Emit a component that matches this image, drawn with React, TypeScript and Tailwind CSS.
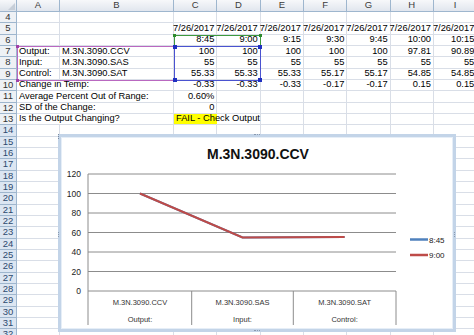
import React from "react";

type Cell = { t?: string; r?: boolean; span?: boolean; fail?: boolean };

const cols = ["A", "B", "C", "D", "E", "F", "G", "H", "I"];

const nums = (vals: string[]): Cell[] => vals.map((v) => ({ t: v, r: true }));

const rows: { n: number; cells: Cell[] }[] = [
  { n: 4, cells: [] },
  { n: 5, cells: [{}, {}, ...nums(Array(7).fill("7/26/2017"))] },
  { n: 6, cells: [{}, {}, ...nums(["8:45", "9:00", "9:15", "9:30", "9:45", "10:00", "10:15"])] },
  { n: 7, cells: [{ t: "Output:" }, { t: "M.3N.3090.CCV" }, ...nums(["100", "100", "100", "100", "100", "97.81", "90.89"])] },
  { n: 8, cells: [{ t: "Input:" }, { t: "M.3N.3090.SAS" }, ...nums(Array(7).fill("55"))] },
  { n: 9, cells: [{ t: "Control:" }, { t: "M.3N.3090.SAT" }, ...nums(["55.33", "55.33", "55.33", "55.17", "55.17", "54.85", "54.85"])] },
  { n: 10, cells: [{ t: "Change in Temp:", span: true }, ...nums(["-0.33", "-0.33", "-0.33", "-0.17", "-0.17", "0.15", "0.15"])] },
  { n: 11, cells: [{ t: "Average Percent Out of Range:", span: true }, { t: "0.60%", r: true }] },
  { n: 12, cells: [{ t: "SD of the Change:", span: true }, { t: "0", r: true }] },
  { n: 13, cells: [{ t: "Is the Output Changing?", span: true }, { t: "FAIL - Check Output", span: true, fail: true }] },
];
for (let n = 14; n <= 32; n++) rows.push({ n, cells: [] });

function fill(cells: Cell[]): Cell[] {
  const out = [...cells];
  let used = out.reduce((s, c) => s + (c.span ? 2 : 1), 0);
  while (used < 9) {
    out.push({});
    used++;
  }
  return out;
}

const yTicks = [120, 100, 80, 60, 40, 20, 0];
const yOf = (v: number) => 291 - (v * 117) / 120;
const font = "Liberation Sans, Arial, sans-serif";

const categories = [
  { name: "M.3N.3090.CCV", label: "Output:", x: 140 },
  { name: "M.3N.3090.SAS", label: "Input:", x: 242.5 },
  { name: "M.3N.3090.SAT", label: "Control:", x: 344.6 },
];

function Handles({ color, size }: { color: string; size: string }) {
  const c = `absolute ${size} ${color}`;
  return (
    <>
      <span className={`${c} -left-[2px] -top-[2px]`} />
      <span className={`${c} -right-[2px] -top-[2px]`} />
      <span className={`${c} -left-[2px] -bottom-[2px]`} />
      <span className={`${c} -right-[2px] -bottom-[2px]`} />
    </>
  );
}

export default function App() {
  return (
    <div className="relative w-[474px] h-[335px] overflow-hidden bg-white font-['Liberation_Sans',Arial,sans-serif] text-[9.3px] text-black">
      <div className="grid grid-cols-[17px_43px_114px_repeat(7,43.33px)] auto-rows-[11.333px] grid-rows-[12px]">
        {/* header row */}
        <div className="border-r border-b border-[#9EB6CE] bg-gradient-to-b from-[#F7F8FA] to-[#DCE2EA] flex items-end justify-end">
          <div className="w-0 h-0 border-l-[7px] border-l-transparent border-b-[7px] border-b-[#C6CED8] mr-[1px] mb-[1px]" />
        </div>
        {cols.map((c) => (
          <div
            key={c}
            className="border-r border-b border-[#9EB6CE] bg-gradient-to-b from-[#F7F8FA] to-[#E1E6EE] flex items-center justify-center text-[9.5px] text-[#3B3B3B]"
          >
            {c}
          </div>
        ))}

        {rows.map((row) => (
          <React.Fragment key={row.n}>
            <div
              className={
                row.n >= 14
                  ? "border-r border-b border-[#9EB6CE] bg-[#DCE6F2] flex items-center justify-center text-[9.5px] text-[#2E4A6E]"
                  : "border-r border-b border-[#9EB6CE] bg-[#EEF1F5] flex items-center justify-center text-[9.5px] text-[#333]"
              }
            >
              {row.n}
            </div>
            {fill(row.cells).map((c, i) => (
              <div
                key={i}
                className={[
                  "border-r border-b border-[#D9DEE7] flex items-center whitespace-nowrap leading-none",
                  c.span ? "col-span-2" : "",
                  c.r ? "justify-end pr-[2px]" : "pl-[2px]",
                  c.fail ? "bg-[linear-gradient(to_right,#FFFF00_43px,transparent_43px)]" : "",
                ].join(" ")}
              >
                {c.t}
              </div>
            ))}
          </React.Fragment>
        ))}
      </div>

      {/* chart data range highlights over the cells */}
      <div className="absolute left-[17px] top-[46px] w-[158px] h-[35px] border border-[#B968C0]">
        <span className="absolute -left-[2px] -top-[2px] w-[3px] h-[3px] bg-[#A040A8]" />
        <span className="absolute -left-[2px] -bottom-[2px] w-[3px] h-[3px] bg-[#A040A8]" />
      </div>
      <div className="absolute left-[174px] top-[35px] w-[87px] h-[12px] border border-[#3E9A3E]">
        <span className="absolute -left-[2px] -top-[2px] w-[3px] h-[3px] bg-[#2E8A2E]" />
        <span className="absolute -right-[2px] -top-[2px] w-[3px] h-[3px] bg-[#2E8A2E]" />
      </div>
      <div className="absolute left-[174px] top-[46px] w-[87px] h-[35px] border border-[#4A52D0]">
        <Handles color="bg-[#2030C0]" size="w-[4px] h-[4px]" />
      </div>

      {/* embedded chart floating over the sheet */}
      <div className="absolute left-[58px] top-[134px] w-[398px] h-[198px] border-[3px] border-[#C3D4E8] bg-white shadow-[inset_0_0_0_1px_#E6EEF7]">
        <svg viewBox="61 137 392 192" width="392" height="192" className="block">
          <text x="258" y="159" textAnchor="middle" fontFamily={font} fontWeight="bold" fontSize="14" fill="#111">
            M.3N.3090.CCV
          </text>
          {yTicks.map((v) => (
            <g key={v}>
              <line x1={88} x2={396} y1={yOf(v)} y2={yOf(v)} stroke="#8C8C8C" strokeWidth="1" />
              <text x="81" y={yOf(v) + 3} textAnchor="end" fontFamily={font} fontSize="8.5" fill="#222">
                {v}
              </text>
            </g>
          ))}
          <line x1={88} x2={88} y1={174} y2={325} stroke="#8C8C8C" />
          {[191.7, 293.3, 396].map((x) => (
            <line key={x} x1={x} x2={x} y1={291} y2={325} stroke="#8C8C8C" />
          ))}
          {categories.map((c) => (
            <g key={c.name}>
              <text x={c.x} y={304.5} textAnchor="middle" fontFamily={font} fontSize="7.5" fill="#333333">
                {c.name}
              </text>
              <text x={c.x} y={322} textAnchor="middle" fontFamily={font} fontSize="7.5" fill="#333333">
                {c.label}
              </text>
            </g>
          ))}
          <polyline points={`140,${yOf(100)} 242.5,${yOf(55)} 344.6,${yOf(55.33)}`} fill="none" stroke="#4F81BD" strokeWidth="2" />
          <polyline points={`140,${yOf(100)} 242.5,${yOf(55)} 344.6,${yOf(55.33)}`} fill="none" stroke="#BE4B48" strokeWidth="2" />
          <line x1={410} x2={428} y1={239.5} y2={239.5} stroke="#4F81BD" strokeWidth="2.5" />
          <text x="429" y="242.5" fontFamily={font} fontSize="8" fill="#222">8:45</text>
          <line x1={410} x2={428} y1={255} y2={255} stroke="#BE4B48" strokeWidth="2.5" />
          <text x="429" y="258" fontFamily={font} fontSize="8" fill="#222">9:00</text>
        </svg>
        <span className="absolute left-[-3px] top-[-3px] w-[3px] h-[5px] border-l border-dotted border-[#7A8AA0]" />
        <span className="absolute left-[-3px] top-[95px] w-[2px] h-[5px] border-l border-dotted border-[#8A9AB0]" />
        <span className="absolute right-[-3px] top-[95px] w-[2px] h-[5px] border-l border-dotted border-[#8A9AB0]" />
        <span className="absolute left-[193px] top-[-3px] w-[6px] h-[2px] border-t border-dotted border-[#8A9AB0]" />
        <span className="absolute left-[193px] bottom-[-3px] w-[6px] h-[2px] border-t border-dotted border-[#8A9AB0]" />
      </div>
    </div>
  );
}
